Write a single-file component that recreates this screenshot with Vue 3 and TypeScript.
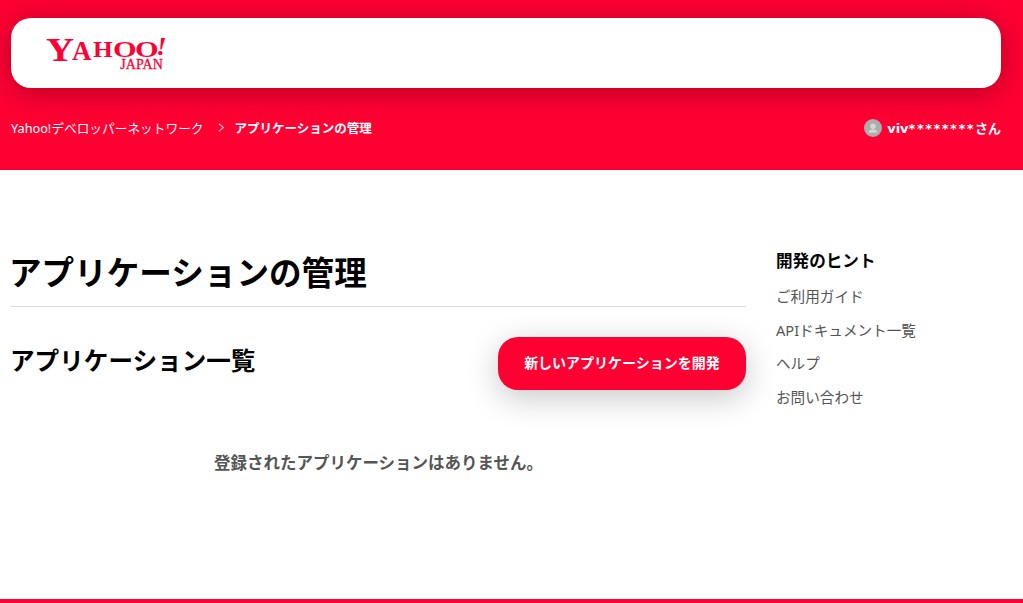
<script setup lang="ts">
const links: string[] = ['ご利用ガイド', 'APIドキュメント一覧', 'ヘルプ', 'お問い合わせ']
</script>

<template>
  <div class="page">
    <header class="masthead">
      <div class="card">
        <div class="logo">
          <div class="logo-main">
            <span class="l y">Y</span><span class="l a">A</span><span class="l h">H</span><span class="l o">O</span><span class="l o">O</span><span class="l bang">!</span>
          </div>
          <div class="logo-sub">JAPAN</div>
        </div>
      </div>
      <div class="subbar">
        <nav class="crumbs">
          <span>Yahoo!デベロッパーネットワーク</span>
          <svg class="chev" width="7" height="9" viewBox="0 0 7 9"><path d="M1 .8 5.4 4.5 1 8.2" fill="none" stroke="#ffb3c4" stroke-width="1.2" /></svg>
          <strong class="current">アプリケーションの管理</strong>
        </nav>
        <div class="user">
          <svg class="avatar" width="18" height="18" viewBox="0 0 18 18">
            <circle cx="9" cy="9" r="9" fill="#adadad" />
            <circle cx="9" cy="7.2" r="2.7" fill="#d6d6d6" />
            <path d="M4.5 13.8c0-2.4 2-3.6 4.5-3.6s4.5 1.2 4.5 3.6z" fill="#d6d6d6" />
          </svg>
          <strong class="name">viv<span class="stars">********</span>さん</strong>
        </div>
      </div>
    </header>

    <main class="content">
      <section class="primary">
        <h1>アプリケーションの管理</h1>
        <div class="list-head">
          <h2>アプリケーション一覧</h2>
          <button class="cta" type="button">新しいアプリケーションを開発</button>
        </div>
        <p class="empty">登録されたアプリケーションはありません。</p>
      </section>
      <aside class="side">
        <h3>開発のヒント</h3>
        <ul>
          <li v-for="l in links" :key="l">{{ l }}</li>
        </ul>
      </aside>
    </main>
    <div class="foot"></div>
  </div>
</template>

<style>
html, body { margin: 0; background: #fff; overflow: hidden; }
</style>

<style scoped>
.page {
  height: 603px;
  display: flex;
  flex-direction: column;
  font-family: "Noto Sans", "Noto Sans CJK JP", sans-serif;
  color: #000;
  overflow: hidden;
}
.masthead {
  height: 170px;
  box-sizing: border-box;
  padding: 18px 22px 0 11px;
  background: #ff0033;
}
.card {
  height: 70px;
  background: #fff;
  border-radius: 20px;
  box-shadow: 0 4px 30px rgba(0, 0, 0, 0.3);
  padding-left: 35px;
}
.logo {
  width: 121px;
  padding-top: 20px;
  color: #ff0033;
  font-family: "Liberation Serif", serif;
  font-weight: 700;
}
.logo-main {
  display: flex;
  align-items: flex-end;
  height: 24px;
}
.l {
  display: block;
  flex: none;
  transform-origin: left bottom;
  white-space: nowrap;
}
.y { width: 26px; font-size: 33px; line-height: 24px; transform: scaleX(1.18); }
.a { width: 21px; font-size: 27px; line-height: 20px; margin-bottom: 1px; }
.h { width: 20px; font-size: 23px; line-height: 17px; margin-bottom: 4px; transform: scaleX(1.1); }
.o { width: 22px; font-size: 23px; line-height: 17px; margin-bottom: 4px; transform: scaleX(1.32); }
.bang { width: 8px; font-size: 25px; line-height: 19px; margin-bottom: 6px; margin-left: -1px; font-style: italic; transform: scaleX(1.1); }
.logo-sub {
  font-size: 14px;
  line-height: 12px;
  height: 12px;
  margin-top: -3px;
  text-align: right;
  padding-right: 4px;
  letter-spacing: 0.1px;
  font-weight: 400;
  -webkit-text-stroke: 0.3px #ff0033;
}
.subbar {
  display: flex;
  justify-content: space-between;
  align-items: center;
  margin-top: 31px;
  height: 18px;
  color: #fff;
  font-size: 12.7px;
}
.crumbs { display: flex; align-items: center; position: relative; top: -1px; }
.chev { margin: 0 10px 0 14px; }
.current { font-size: 12.5px; }
.user { display: flex; align-items: center; gap: 5px; }
.name { position: relative; top: -1px; font-size: 13px; font-family: "DejaVu Sans", "Noto Sans CJK JP", sans-serif; }
.stars { letter-spacing: 1.5px; }
.content {
  flex: 1;
  display: flex;
  padding: 0 22px 0 11px;
  gap: 30px;
}
.primary { width: 735px; flex: none; }
h1 {
  margin: 79px 0 0;
  font-size: 32.6px;
  line-height: 48px;
  padding-bottom: 9px;
  border-bottom: 1px solid #dcdcdc;
  font-weight: 700;
  text-indent: -2px;
}
.list-head {
  display: flex;
  justify-content: space-between;
  align-items: center;
  margin-top: 30px;
}
h2 {
  margin: 0 0 0 -1px;
  font-size: 24.6px;
  line-height: 36px;
  padding-bottom: 6px;
  font-weight: 700;
}
.cta {
  width: 248px;
  height: 53px;
  border: 0;
  border-radius: 20px;
  background: #ff0033;
  color: #fff;
  font: 700 14px "Noto Sans", "Noto Sans CJK JP", sans-serif;
  box-shadow: 0 8px 32px rgba(0, 0, 0, 0.22);
  padding: 0 0 3px;
}
.empty {
  margin: 61px 0 0;
  text-align: center;
  font-size: 16.5px;
  line-height: 24px;
  font-weight: 700;
  color: #555;
}
.side { flex: 1; padding-top: 79px; }
h3 {
  margin: 0;
  font-size: 16.6px;
  line-height: 24px;
  font-weight: 700;
}
ul { list-style: none; margin: 7px 0 0; padding: 0; }
li {
  font-size: 14.6px;
  line-height: 33.5px;
  color: #555;
}
.foot { height: 4px; background: #ff0033; flex: none; }
</style>
